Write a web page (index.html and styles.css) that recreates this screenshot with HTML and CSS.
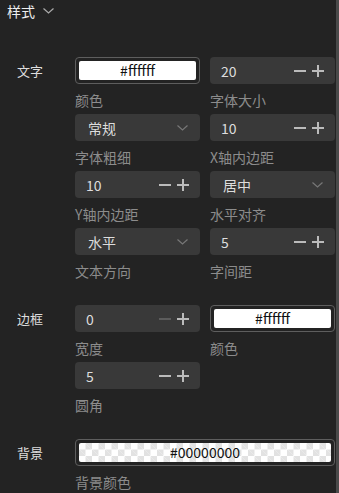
FILE: index.html
```html
<!DOCTYPE html>
<html>
<head>
  <title>样式</title>
  <link rel="stylesheet" href="styles.css">
</head>
<body>
  <div class="page">
    <div class="panel">
      <!-- Collapsible header -->
      <div class="panel-head">
        <span>样式</span>
        <svg class="head-caret" width="11" height="6" viewBox="0 0 11 6"><path d="M0.5 0.5 L5.5 5 L10.5 0.5" fill="none" stroke="#aaa" stroke-width="1.2"/></svg>
      </div>

      <div class="panel-body">
        <!-- Text settings -->
        <div class="section">
          <div class="section-label">文字</div>
          <div class="fields">
            <div class="field">
              <div class="color-box"><div class="swatch">#ffffff</div></div>
              <div class="field-label">颜色</div>
            </div>
            <div class="field">
              <div class="num-input">
                <span class="val">20</span>
                <span class="minus"></span><span class="plus"></span>
              </div>
              <div class="field-label">字体大小</div>
            </div>
            <div class="field">
              <div class="select">
                <span class="val">常规</span>
                <svg class="caret" width="11" height="6" viewBox="0 0 11 6"><path d="M0.5 0.5 L5.5 5 L10.5 0.5" fill="none" stroke="#777" stroke-width="1.2"/></svg>
              </div>
              <div class="field-label">字体粗细</div>
            </div>
            <div class="field">
              <div class="num-input">
                <span class="val">10</span>
                <span class="minus"></span><span class="plus"></span>
              </div>
              <div class="field-label">X轴内边距</div>
            </div>
            <div class="field">
              <div class="num-input">
                <span class="val">10</span>
                <span class="minus"></span><span class="plus"></span>
              </div>
              <div class="field-label">Y轴内边距</div>
            </div>
            <div class="field">
              <div class="select">
                <span class="val">居中</span>
                <svg class="caret" width="11" height="6" viewBox="0 0 11 6"><path d="M0.5 0.5 L5.5 5 L10.5 0.5" fill="none" stroke="#777" stroke-width="1.2"/></svg>
              </div>
              <div class="field-label">水平对齐</div>
            </div>
            <div class="field">
              <div class="select">
                <span class="val">水平</span>
                <svg class="caret" width="11" height="6" viewBox="0 0 11 6"><path d="M0.5 0.5 L5.5 5 L10.5 0.5" fill="none" stroke="#777" stroke-width="1.2"/></svg>
              </div>
              <div class="field-label">文本方向</div>
            </div>
            <div class="field">
              <div class="num-input">
                <span class="val">5</span>
                <span class="minus"></span><span class="plus"></span>
              </div>
              <div class="field-label">字间距</div>
            </div>
          </div>
        </div>

        <!-- Border settings -->
        <div class="section">
          <div class="section-label">边框</div>
          <div class="fields">
            <div class="field">
              <div class="num-input">
                <span class="val">0</span>
                <span class="minus disabled"></span><span class="plus"></span>
              </div>
              <div class="field-label">宽度</div>
            </div>
            <div class="field">
              <div class="color-box"><div class="swatch">#ffffff</div></div>
              <div class="field-label">颜色</div>
            </div>
            <div class="field">
              <div class="num-input">
                <span class="val">5</span>
                <span class="minus"></span><span class="plus"></span>
              </div>
              <div class="field-label">圆角</div>
            </div>
          </div>
        </div>

        <!-- Background settings -->
        <div class="section">
          <div class="section-label">背景</div>
          <div class="fields">
            <div class="field wide">
              <div class="color-box"><div class="swatch checker">#00000000</div></div>
              <div class="field-label">背景颜色</div>
            </div>
          </div>
        </div>
      </div>
    </div>
    <div class="scrollbar"></div>
  </div>
</body>
</html>
```
FILE: styles.css
```css
body {
  margin: 0;
  background-color: #232323;
  font-family: "Noto Sans CJK SC", "Noto Sans", sans-serif;
  color: #ddd;
}
.page {
  display: flex;
  height: 493px;
  overflow: hidden;
}
.panel {
  flex: 1;
}
.scrollbar {
  width: 3px;
  background-color: #4a4a4a;
}
.panel-head {
  display: flex;
  align-items: center;
  height: 22px;
  padding-left: 7px;
  font-size: 14px;
  color: #eee;
}
.head-caret {
  margin-left: 8px;
}
.panel-body {
  padding-top: 35px;
  display: flex;
  flex-direction: column;
  gap: 24px;
}
.section {
  display: flex;
}
.section-label {
  width: 58px;
  padding-left: 17px;
  height: 27px;
  line-height: 27px;
  font-size: 13px;
  color: #ddd;
}
.fields {
  display: grid;
  grid-template-columns: 125px 125px;
  column-gap: 10px;
  row-gap: 4px;
}
.field.wide {
  grid-column: span 2;
}
.field-label {
  padding-top: 6px;
  line-height: 20px;
  font-size: 14px;
  color: #8c8c8c;
  white-space: nowrap;
}
.num-input, .select {
  display: flex;
  align-items: center;
  height: 27px;
  box-sizing: border-box;
  border-radius: 4px;
  background-color: #393939;
  font-size: 14px;
  color: #ddd;
}
.num-input {
  padding: 0 11px;
}
.select {
  padding: 0 12px 0 13px;
}
.val {
  flex: 1;
}
.minus, .plus {
  position: relative;
  width: 12px;
  height: 12px;
}
.plus {
  margin-left: 6px;
}
.minus::before, .plus::before, .plus::after {
  content: "";
  position: absolute;
  background-color: #bbb;
}
.minus::before, .plus::before {
  left: 0;
  right: 0;
  top: 5px;
  height: 2px;
}
.plus::after {
  top: 0;
  bottom: 0;
  left: 5px;
  width: 2px;
}
.minus.disabled::before {
  background-color: #5c5c5c;
}
.color-box {
  height: 27px;
  box-sizing: border-box;
  border: 1px solid #5e5e5e;
  border-radius: 4px;
  padding: 3px;
}
.swatch {
  height: 19px;
  border-radius: 2px;
  background-color: #fff;
  color: #111;
  font-size: 14px;
  line-height: 19px;
  text-align: center;
}
.swatch.checker {
  background-color: #fff;
  background-image:
    linear-gradient(45deg, #e2e2e2 25%, transparent 25%, transparent 75%, #e2e2e2 75%),
    linear-gradient(45deg, #e2e2e2 25%, transparent 25%, transparent 75%, #e2e2e2 75%);
  background-size: 13px 13px;
  background-position: 0 0, 6.5px 6.5px;
}
```
